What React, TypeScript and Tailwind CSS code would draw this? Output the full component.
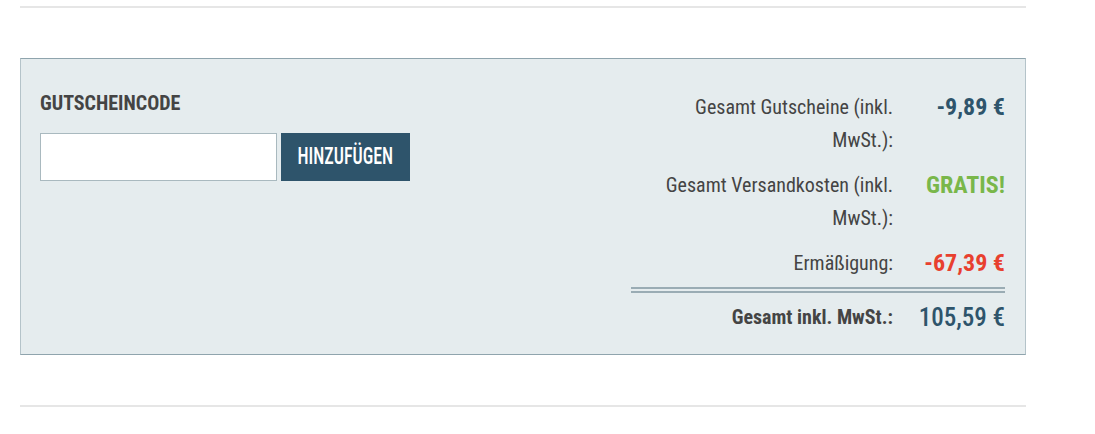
import React from "react";

const font = { fontFamily: '"Roboto Condensed", "Liberation Sans Narrow", Roboto, sans-serif' };

export default function App() {
  return (
    <div className="w-[1095px] h-[434px] bg-white" style={font}>
      <div className="pt-[6px] px-[20px] w-[1046px]">
        <div className="h-[2px] bg-[#e6e6e6]" />
        <div className="mt-[50px] flex border border-[#b4c3c9] border-t-[#8fa4ad] border-b-[#8fa4ad] bg-[#e5ecee] h-[297px]">
          <div className="flex-1 pl-[19px] pt-[32px]">
            <div className="text-[20px] font-bold text-[#444] leading-[24px]">GUTSCHEINCODE</div>
            <div className="mt-[18px] flex gap-[4px]">
              <input className="w-[237px] h-[48px] bg-white border border-[#a9b9bf] outline-none" />
              <button className="w-[129px] h-[48px] bg-[#2e546b] text-white flex items-center justify-center">
                <span className="inline-block text-[23px] leading-[24px] font-medium scale-x-[0.78]">HINZUFÜGEN</span>
              </button>
            </div>
          </div>
          <div className="w-[374px] mr-[20px] pt-[32px]">
            <div className="flex">
              <div className="flex-1 text-right text-[20px] leading-[33px] text-[#444] pl-[30px]">Gesamt Gutscheine (inkl. MwSt.):</div>
              <div className="w-[112px] text-right text-[24px] font-bold text-[#2e546b] leading-[33px]">-9,89 €</div>
            </div>
            <div className="flex mt-[12px]">
              <div className="flex-1 text-right text-[20px] leading-[33px] text-[#444] pl-[30px]">Gesamt Versandkosten (inkl. MwSt.):</div>
              <div className="w-[112px] text-right text-[24px] font-bold text-[#79b74a] leading-[33px]">GRATIS!</div>
            </div>
            <div className="flex mt-[12px]">
              <div className="flex-1 text-right text-[20px] leading-[33px] text-[#444]">Ermäßigung:</div>
              <div className="w-[112px] text-right text-[24px] font-bold text-[#e8402e] leading-[33px]">-67,39 €</div>
            </div>
            <div className="mt-[7px] border-t-[6px] border-double border-[#9aacb4]" />
            <div className="flex mt-[8px]">
              <div className="flex-1 text-right text-[20px] font-bold leading-[33px] text-[#444]">Gesamt inkl. MwSt.:</div>
              <div className="w-[112px] text-right text-[25px] font-medium text-[#2e546b] leading-[33px]">105,59 €</div>
            </div>
          </div>
        </div>
        <div className="mt-[50px] h-[2px] bg-[#e6e6e6]" />
      </div>
    </div>
  );
}
